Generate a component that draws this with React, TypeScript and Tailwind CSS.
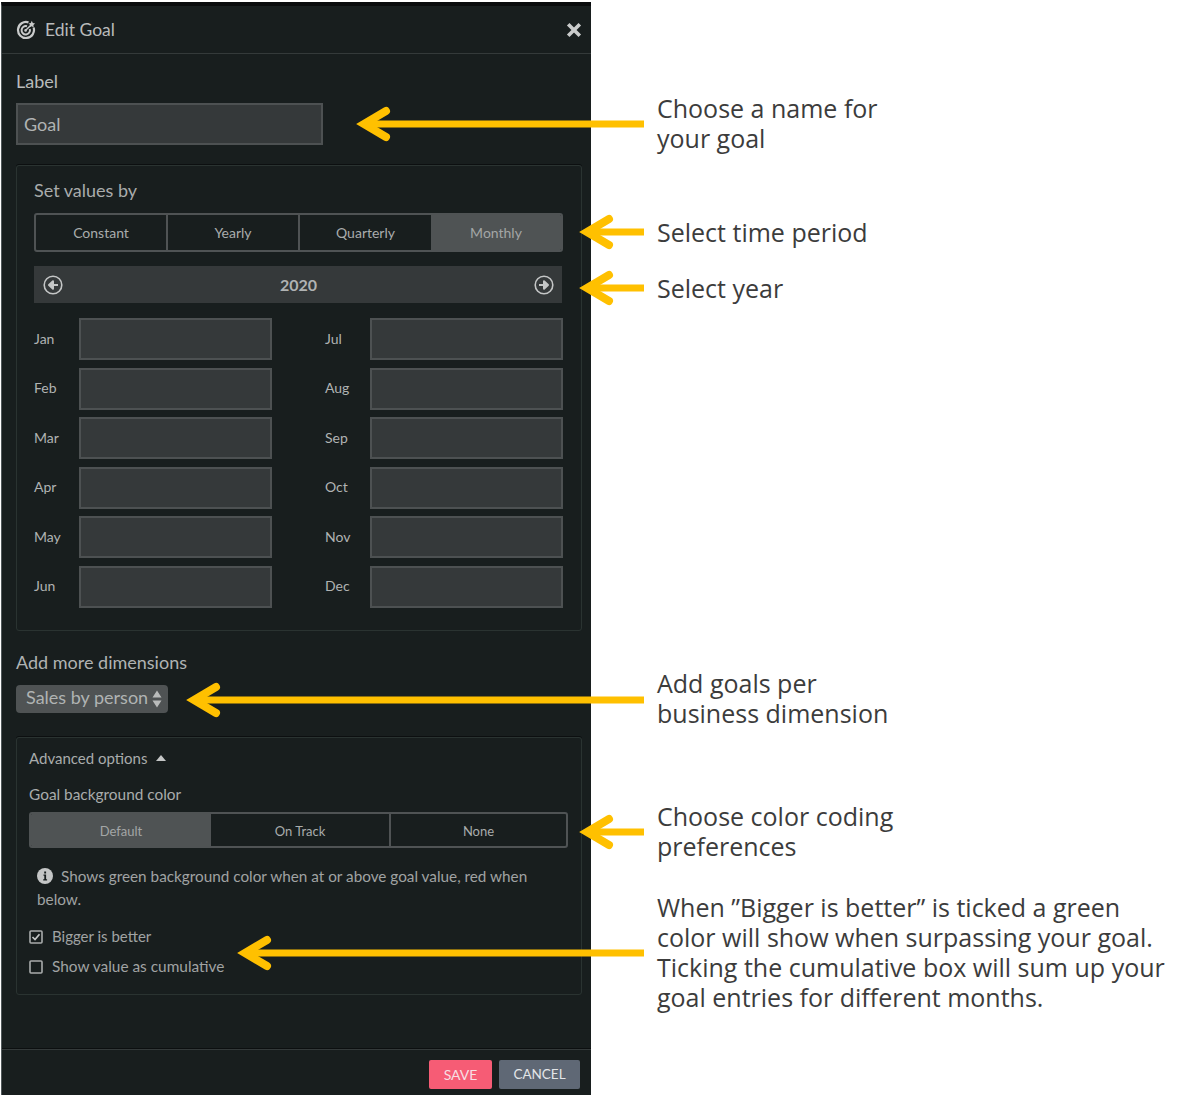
import React from 'react';

const leftMonths = ['Jan', 'Feb', 'Mar', 'Apr', 'May', 'Jun'];
const rightMonths = ['Jul', 'Aug', 'Sep', 'Oct', 'Nov', 'Dec'];

const arrows = [
  { tip: 358, y: 124 },
  { tip: 581, y: 232 },
  { tip: 581, y: 288 },
  { tip: 188, y: 700 },
  { tip: 581, y: 832 },
  { tip: 239, y: 953 },
];

const CircleArrow = ({ flip }: { flip?: boolean }) => (
  <svg width="20" height="20" viewBox="0 0 20 20" className={flip ? 'rotate-180' : ''}>
    <circle cx="10" cy="10" r="8.8" fill="none" stroke="#c4c6c6" strokeWidth="1.6" />
    <path d="M15 10H8M10 6.2L6 10l4 3.8z" fill="#c4c6c6" stroke="#c4c6c6" strokeWidth="2" strokeLinejoin="round" />
  </svg>
);

const GoalIcon = () => (
  <svg width="20" height="20" viewBox="0 0 20 20" fill="none" stroke="#c9cbcb">
    <path d="M12.5 2.4A8 8 0 1 0 17.6 7.5" strokeWidth="2.2" />
    <path d="M11 6.2A4.2 4.2 0 1 0 13.8 9" strokeWidth="2" />
    <circle cx="9.6" cy="10.4" r="1.3" fill="#c9cbcb" stroke="none" />
    <path d="M10 10L15 5" strokeWidth="1.5" />
    <path d="M15.8 0.8l1 2.2 2.3 .5-1.7 1.6 .3 2.3-2-1.1-2 1 .5-2.2-1.6-1.7 2.2-.3z" fill="#c9cbcb" stroke="none" />
  </svg>
);

const MonthRow = ({ name }: { name: string }) => (
  <div className="flex items-center h-[42px]">
    <span className="w-[45px] pb-[2px] text-[14px] text-[#b0b3b3]">{name}</span>
    <div className="w-[193px] h-[42px] bg-[#35393a] border-2 border-[#4d5152]" />
  </div>
);

const Tab = ({ label, width, active, small }: { label: string; width: string; active?: boolean; small?: boolean }) => (
  <div
    className={`${width} flex items-center justify-center ${small ? 'text-[13px] pt-[4px]' : 'text-[14px]'} ${
      active ? 'bg-[#4f5354] text-[#a3a6a6]' : 'text-[#a9acac]'
    }`}
  >
    {label}
  </div>
);

const Note = ({ text, className }: { text: string; className: string }) => (
  <div className={`${className} whitespace-pre-line text-[25px] leading-[30px] text-[#3c3c3c]`}>{text}</div>
);

const App = () => {
  return (
    <div className="relative w-[1195px] h-[1095px] bg-white flex overflow-hidden font-['Lato',sans-serif]">
      {/* panel */}
      <div className="w-[591px] h-[1095px] pt-[2px] pl-px shrink-0 flex flex-col">
        <div className="flex-1 flex flex-col bg-[#181e1e] border-l border-[#50585a] border-t-4 border-t-[#0a0c0d]">
          <div className="h-[48px] flex items-center justify-between pl-[14px] pr-[9px] border-b border-[#343a3a]">
            <div className="flex items-center gap-[9px]">
              <GoalIcon />
              <span className="pt-px text-[17.5px] text-[#b9bbbb]">Edit Goal</span>
            </div>
            <svg width="16" height="16" viewBox="0 0 16 16">
              <path d="M2.2 2.2l11.6 11.6M13.8 2.2L2.2 13.8" stroke="#c9cbcb" strokeWidth="3.6" />
            </svg>
          </div>

          <div className="flex-1 pl-[14px] pr-[9px]">
            <div className="mt-[15px] h-[24px] leading-[24px] text-[18px] text-[#b9bbbb]">Label</div>
            <div className="mt-[10px] w-[307px] h-[42px] bg-[#35393a] border-2 border-[#4d5152] flex items-center pl-[6px] text-[18px] text-[#b0b3b3]">
              Goal
            </div>

            <div className="mt-[20px] h-[466px] rounded-[3px] border border-[#2a3331] pl-[17px] pr-[16px] shadow-[0_-1px_0_#0c0f10]">
              <div className="mt-[12px] h-[24px] leading-[24px] text-[18px] text-[#a9acac]">Set values by</div>
              <div className="mt-[11px] w-[529px] h-[39px] flex rounded-[3px] border-2 border-[#4f5354] overflow-hidden">
                <Tab label="Constant" width="w-[132px] border-r-2 border-[#4f5354]" />
                <Tab label="Yearly" width="w-[132px] border-r-2 border-[#4f5354]" />
                <Tab label="Quarterly" width="w-[131px]" />
                <Tab label="Monthly" width="flex-1" active />
              </div>
              <div className="mt-[14px] w-[528px] h-[37px] bg-[#35393a] flex items-center justify-between pl-[9px] pr-[8px]">
                <CircleArrow />
                <span className="text-[16px] font-bold text-[#b0b3b3]">2020</span>
                <CircleArrow flip />
              </div>
              <div className="mt-[15px] flex justify-between w-[529px]">
                <div className="flex flex-col gap-[7.6px]">
                  {leftMonths.map((m) => (
                    <MonthRow key={m} name={m} />
                  ))}
                </div>
                <div className="flex flex-col gap-[7.6px]">
                  {rightMonths.map((m) => (
                    <MonthRow key={m} name={m} />
                  ))}
                </div>
              </div>
            </div>

            <div className="mt-[19px] h-[24px] leading-[24px] text-[18px] text-[#b0b3b3]">Add more dimensions</div>
            <div className="mt-[11px] w-[152px] h-[28px] rounded-[4px] bg-[#4f5354] flex items-center justify-between pl-[10px] pr-[6px] text-[18px] text-[#b0b3b3]">
              <span className="pb-[3px]">Sales by person</span>
              <svg width="10" height="20" viewBox="0 0 10 20" fill="#b9bbbb">
                <path d="M5 1.5L9.5 8.5H.5zM5 18.5L.5 11.5h9z" />
              </svg>
            </div>

            <div className="mt-[24px] h-[258px] rounded-[3px] border border-[#2a3331] pl-[12px] shadow-[0_-1px_0_#0c0f10]">
              <div className="mt-[9px] h-[22px] flex items-center gap-[9px] text-[15px] text-[#a9acac]">
                Advanced options
                <svg width="10" height="6" viewBox="0 0 10 6" fill="#c4c6c6">
                  <path d="M5 0l5 6H0z" />
                </svg>
              </div>
              <div className="mt-[14px] h-[22px] leading-[22px] text-[15.4px] text-[#a9acac]">Goal background color</div>
              <div className="mt-[7px] w-[539px] h-[36px] flex rounded-[3px] border-2 border-[#4f5354] overflow-hidden">
                <Tab label="Default" width="w-[180px]" active small />
                <Tab label="On Track" width="w-[180px] border-r-2 border-[#4f5354]" small />
                <Tab label="None" width="flex-1" small />
              </div>
              <div className="mt-[17px] pl-[8px] w-[530px] text-[15.3px] leading-[22px] text-[#a0a3a3]">
                <svg width="16" height="16" viewBox="0 0 16 16" className="inline-block mr-[8px] mb-[4px]">
                  <circle cx="8" cy="8" r="8" fill="#c4c6c6" />
                  <path d="M6.5 6.6h2.6v4.6h1v1.2H6.2v-1.2h1.1V7.8H6.5zM7.2 3.5h1.9v1.9H7.2z" fill="#181e1e" />
                </svg>
                Shows green background color when at or above goal value, red when below.
              </div>
              <div className="mt-[16px] h-[22px] flex items-center gap-[9px] text-[15px] text-[#a0a3a3]">
                <svg width="14" height="14" viewBox="0 0 14 14" fill="none">
                  <rect x="1" y="1" width="12" height="12" rx="1" stroke="#a9acac" strokeWidth="1.6" />
                  <path d="M3.5 7l2.5 2.5L10.5 4.2" stroke="#c4c6c6" strokeWidth="1.7" />
                </svg>
                <span className="pb-[1px]">Bigger is better</span>
              </div>
              <div className="mt-[8px] h-[22px] flex items-center gap-[9px] text-[15.4px] text-[#a0a3a3]">
                <svg width="14" height="14" viewBox="0 0 14 14" fill="none">
                  <rect x="1" y="1" width="12" height="12" rx="1" stroke="#a9acac" strokeWidth="1.6" />
                </svg>
                <span className="pb-[1px]">Show value as cumulative</span>
              </div>
            </div>
          </div>

          <div className="h-[46px] border-t border-[#343a3a] shadow-[0_-1px_0_#0c0f10] flex justify-end gap-[7px] pr-[11px] pt-[10px]">
            <div className="w-[63px] h-[29px] rounded-[2px] bg-[#f65c75] flex items-center justify-center text-[14px] text-[#f7dfe3]">
              SAVE
            </div>
            <div className="w-[81px] h-[29px] rounded-[2px] bg-[#5f6875] flex items-center justify-center text-[13.5px] text-[#e3e5e8]">
              CANCEL
            </div>
          </div>
        </div>
      </div>

      {/* notes column */}
      <div className="pl-[66px] font-['Open_Sans',sans-serif]">
        <Note className="mt-[93px]" text={'Choose a name for\nyour goal'} />
        <Note className="mt-[64px]" text="Select time period" />
        <Note className="mt-[26px]" text="Select year" />
        <Note className="mt-[365px]" text={'Add goals per\nbusiness dimension'} />
        <Note className="mt-[73px]" text={'Choose color coding\npreferences'} />
        <Note
          className="mt-[31px]"
          text={
            'When ”Bigger is better” is ticked a green\ncolor will show when surpassing your goal.\nTicking the cumulative box will sum up your\ngoal entries for different months.'
          }
        />
      </div>

      {/* yellow arrows lie over the panel */}
      <svg width="1195" height="1095" className="absolute inset-0 pointer-events-none" fill="none" stroke="#ffc000">
        {arrows.map((a) => (
          <g key={a.y}>
            <path d={`M${a.tip + 6} ${a.y}H644`} strokeWidth="7" />
            <path
              d={`M${a.tip + 28} ${a.y - 13}L${a.tip + 6} ${a.y}L${a.tip + 28} ${a.y + 13}`}
              strokeWidth="8"
              strokeLinecap="round"
            />
          </g>
        ))}
      </svg>
    </div>
  );
};

export default App;
